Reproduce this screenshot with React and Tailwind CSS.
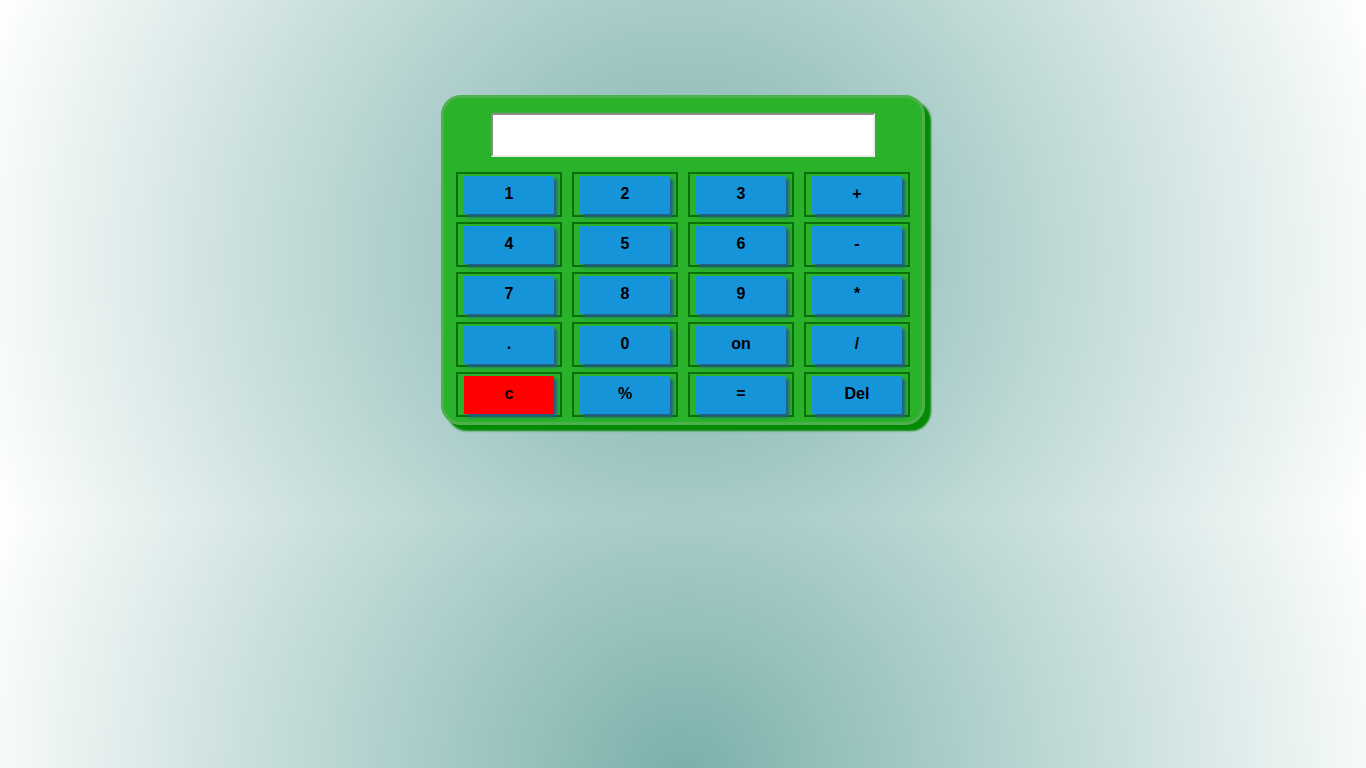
import React, { useState } from 'react';

const keys = [
  ['1', '2', '3', '+'],
  ['4', '5', '6', '-'],
  ['7', '8', '9', '*'],
  ['.', '0', 'on', '/'],
  ['c', '%', '=', 'Del'],
];

function Key({ label, onPress }) {
  const red = label === 'c';
  return (
    <div className="flex h-[45px] w-[106px] items-center justify-center border-2 border-[#0b6f0b]">
      <button
        onClick={() => onPress(label)}
        className={`h-[38px] w-[90px] pb-[2px] text-[16px] font-bold text-black shadow-[3px_3px_3px_#245d8c] ${
          red ? 'bg-[#ff0000]' : 'bg-[#1694da]'
        }`}
      >
        {label}
      </button>
    </div>
  );
}

export default function App() {
  const [value, setValue] = useState('');

  const press = (k) => {
    if (k === 'c' || k === 'on') return setValue('');
    if (k === 'Del') return setValue((v) => v.slice(0, -1));
    if (k === '=') {
      try {
        // eslint-disable-next-line no-new-func
        setValue(String(Function(`return (${value.replace(/%/g, '/100')})`)()));
      } catch (e) {
        setValue('Error');
      }
      return;
    }
    setValue((v) => v + k);
  };

  return (
    <div
      className="min-h-screen bg-[radial-gradient(circle,#7ab0aa,#ffffff)] bg-[length:100%_518px] bg-repeat pt-[95px]"
      style={{ fontFamily: '"Liberation Sans", Arial, sans-serif' }}
    >
      <div className="mx-auto flex w-[484px] flex-col items-center rounded-[20px] border-[3px] border-[#4db04d] bg-[#29b22a] pb-[5px] pt-[15px] shadow-[6px_6px_2px_#058a05]">
        <input
          readOnly
          value={value}
          className="h-[44px] w-[384px] border-2 border-t-[#8a8a8a] border-l-[#8a8a8a] border-b-[#ececec] border-r-[#ececec] bg-white px-2 text-right text-[20px] outline-none"
        />
        <div className="mt-[15px] grid grid-cols-[repeat(4,106px)] gap-x-[10px] gap-y-[5px]">
          {keys.flat().map((k) => (
            <Key key={k} label={k} onPress={press} />
          ))}
        </div>
      </div>
    </div>
  );
}
